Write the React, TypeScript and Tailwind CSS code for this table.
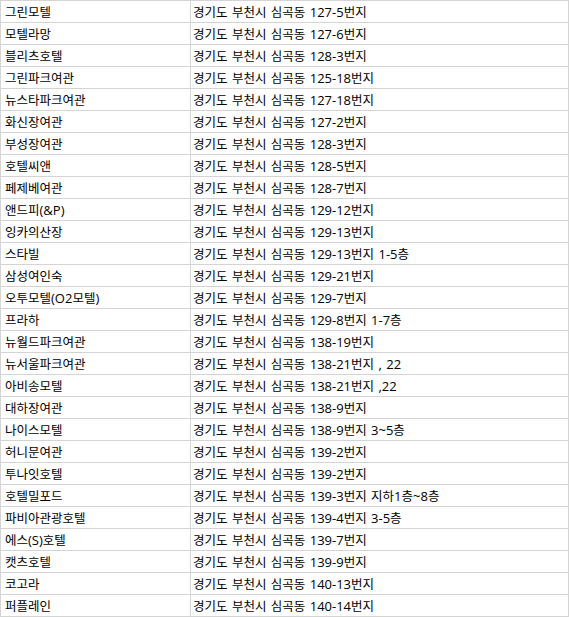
const rows: [string, string][] = [
  ['그린모텔', '경기도 부천시 심곡동 127-5번지'],
  ['모텔라망', '경기도 부천시 심곡동 127-6번지'],
  ['블리츠호텔', '경기도 부천시 심곡동 128-3번지'],
  ['그린파크여관', '경기도 부천시 심곡동 125-18번지'],
  ['뉴스타파크여관', '경기도 부천시 심곡동 127-18번지'],
  ['화신장여관', '경기도 부천시 심곡동 127-2번지'],
  ['부성장여관', '경기도 부천시 심곡동 128-3번지'],
  ['호텔씨앤', '경기도 부천시 심곡동 128-5번지'],
  ['페제베여관', '경기도 부천시 심곡동 128-7번지'],
  ['앤드피(&P)', '경기도 부천시 심곡동 129-12번지'],
  ['잉카의산장', '경기도 부천시 심곡동 129-13번지'],
  ['스타빌', '경기도 부천시 심곡동 129-13번지 1-5층'],
  ['삼성여인숙', '경기도 부천시 심곡동 129-21번지'],
  ['오투모텔(O2모텔)', '경기도 부천시 심곡동 129-7번지'],
  ['프라하', '경기도 부천시 심곡동 129-8번지 1-7층'],
  ['뉴월드파크여관', '경기도 부천시 심곡동 138-19번지'],
  ['뉴서울파크여관', '경기도 부천시 심곡동 138-21번지 , 22'],
  ['아비송모텔', '경기도 부천시 심곡동 138-21번지 ,22'],
  ['대하장여관', '경기도 부천시 심곡동 138-9번지'],
  ['나이스모텔', '경기도 부천시 심곡동 138-9번지 3~5층'],
  ['허니문여관', '경기도 부천시 심곡동 139-2번지'],
  ['투나잇호텔', '경기도 부천시 심곡동 139-2번지'],
  ['호텔밀포드', '경기도 부천시 심곡동 139-3번지 지하1층~8층'],
  ['파비아관광호텔', '경기도 부천시 심곡동 139-4번지 3-5층'],
  ['에스(S)호텔', '경기도 부천시 심곡동 139-7번지'],
  ['캣츠호텔', '경기도 부천시 심곡동 139-9번지'],
  ['코고라', '경기도 부천시 심곡동 140-13번지'],
  ['퍼플레인', '경기도 부천시 심곡동 140-14번지'],
]

// hangul runs are set a bit smaller than latin/digits, like the Windows font in the shot
function Cell({ text }: { text: string }) {
  const parts = text.split(/([가-힣]+)/).filter((p) => p !== '')
  return (
    <>
      {parts.map((p, i) =>
        /[가-힣]/.test(p) ? (
          <span key={i} className="font-['Noto_Sans_CJK_KR',sans-serif] text-[12.5px]">
            {p}
          </span>
        ) : (
          <span key={i} className="font-['Open_Sans','Noto_Sans_CJK_KR',sans-serif] text-[13px] [word-spacing:1px]">
            {p}
          </span>
        )
      )}
    </>
  )
}

export default function App() {
  return (
    <div className="w-[569px] bg-white text-black">
      <div className="border-t border-l border-r border-[#d4d4d4]">
        {rows.map(([name, addr], i) => (
          <div key={i} className="flex h-[22px] border-b border-[#d4d4d4]">
            <div className="w-[190px] shrink-0 border-r border-[#d4d4d4] pl-[4px] leading-[21px] whitespace-nowrap">
              <Cell text={name} />
            </div>
            <div className="flex-1 pl-[2px] leading-[21px] whitespace-nowrap">
              <Cell text={addr} />
            </div>
          </div>
        ))}
      </div>
    </div>
  )
}
